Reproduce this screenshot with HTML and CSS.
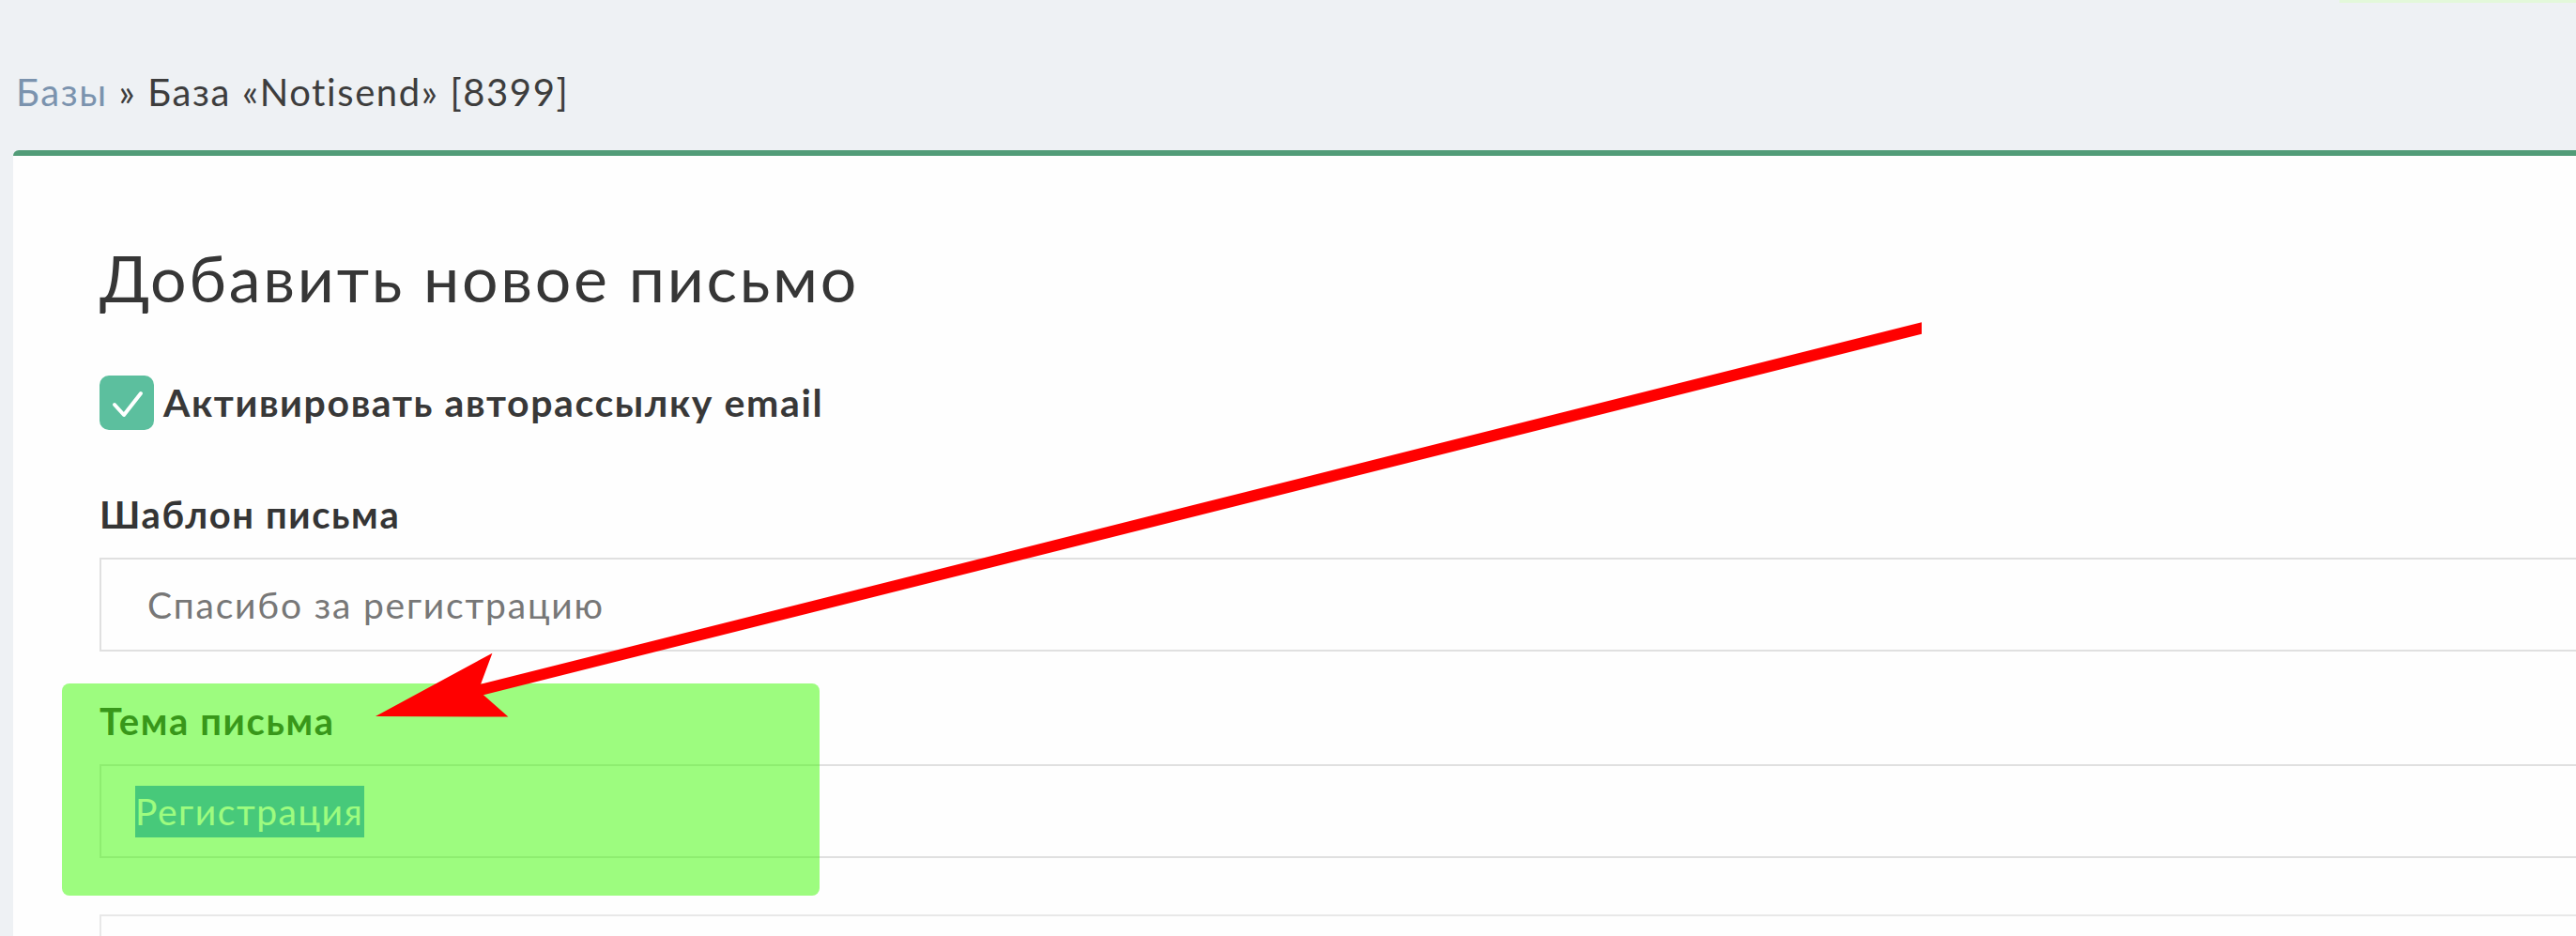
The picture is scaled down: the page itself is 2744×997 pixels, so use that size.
FILE: index.html
```html
<!DOCTYPE html>
<html lang="ru">
<head>
<meta charset="utf-8">
<title>Добавить новое письмо</title>
<link rel="stylesheet" href="styles.css">
</head>
<body>
<div class="top-strip"></div>
<nav class="crumbs"><a class="crumb-link" href="#">Базы</a> » База «Notisend» [8399]</nav>
<main class="card">
  <h1 class="title">Добавить новое письмо</h1>
  <label class="check">
    <span class="check-box">
      <svg viewBox="0 0 58 58" width="58" height="58"><polyline points="16,31 26,42 44,19" fill="none" stroke="#fff" stroke-width="4" stroke-linecap="round" stroke-linejoin="round"/></svg>
    </span>
    <span class="check-text">Активировать авторассылку email</span>
  </label>
  <div class="field">
    <div class="field-label">Шаблон письма</div>
    <div class="input input-select">Спасибо за регистрацию</div>
  </div>
  <div class="field field-second">
    <div class="field-label">Тема письма</div>
    <div class="input input-text"><span class="selected">Регистрация</span></div>
  </div>
  <div class="input input-next"></div>
</main>
<div class="mark"></div>
<svg class="arrow" viewBox="0 0 2744 997" width="2744" height="997">
  <polygon points="495.5,732.8 2047,343.3 2047,355.7 498.5,744.4" fill="#ff0000"/>
  <polygon points="400,763 541.4,763.5 509.6,735.5 524.4,695.7" fill="#ff0000"/>
</svg>
</body>
</html>
```

FILE: styles.css
```css
html, body {
  margin: 0;
  padding: 0;
  overflow: hidden;
}
body {
  background: #eef1f4;
  font-family: "Lato", "Noto Sans", sans-serif;
  color: #3a3a3a;
  width: 2744px;
  height: 997px;
  position: relative;
}
.top-strip {
  position: absolute;
  top: 0;
  left: 2492px;
  right: 0;
  height: 3px;
  background: #e3f8da;
}
.crumbs {
  padding: 74px 0 0 17px;
  font-size: 40px;
  line-height: 48px;
  letter-spacing: 1.6px;
  color: #3d3d3d;
  margin-bottom: 38px;
}
.crumb-link {
  color: #7b93ae;
  text-decoration: none;
}
.card {
  margin-left: 14px;
  margin-right: -300px;
  background: #fefefe;
  border-top: 6px solid #529c78;
  border-radius: 6px 0 0 0;
  padding: 90px 0 60px 92px;
  min-height: 900px;
}
.title {
  margin: 0;
  font-weight: 400;
  font-size: 68px;
  line-height: 80px;
  letter-spacing: 2.7px;
  color: #363636;
}
.check {
  display: flex;
  align-items: center;
  gap: 10px;
  margin-top: 64px;
  height: 58px;
}
.check-box {
  width: 58px;
  height: 58px;
  border-radius: 10px;
  background: #5cbf9e;
  display: flex;
}
.check-text {
  font-size: 41px;
  font-weight: 700;
  line-height: 54px;
  letter-spacing: 1.6px;
  color: #383838;
}
.field {
  margin-top: 66px;
}
.field-second {
  margin-top: 50px;
}
.field-label {
  font-size: 40px;
  font-weight: 700;
  line-height: 48px;
  letter-spacing: 1.6px;
  color: #353535;
  margin-bottom: 22px;
}
.input {
  height: 96px;
  border: 2px solid #e0e0e0;
  display: flex;
  align-items: center;
  font-size: 39px;
  letter-spacing: 1.55px;
  color: #777;
}
.input-select {
  padding-left: 49px;
  letter-spacing: 1.8px;
}
.input-text {
  padding-left: 36px;
}
.selected {
  display: inline-block;
  height: 55px;
  line-height: 55px;
  background: #5399f4;
  color: #fff;
  padding-right: 1px;
}
.input-next {
  margin-top: 60px;
  border-color: #e8e8e8;
  border-bottom: none;
}
.mark {
  position: absolute;
  left: 66px;
  top: 728px;
  width: 807px;
  height: 226px;
  border-radius: 8px;
  background: rgba(59, 249, 0, 0.5);
}
.arrow {
  position: absolute;
  left: 0;
  top: 0;
  pointer-events: none;
}
```
